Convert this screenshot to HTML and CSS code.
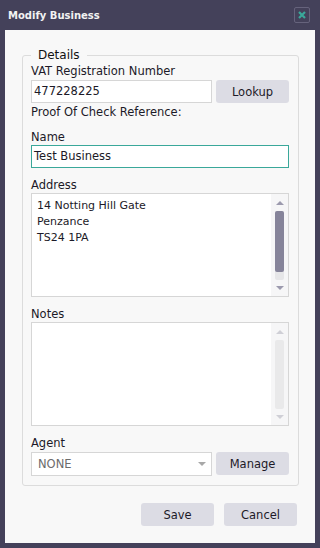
FILE: index.html
```html
<!DOCTYPE html>
<html>
<head>
  <title>Modify Business</title>
  <link rel="stylesheet" href="styles.css">
</head>
<body>
  <div class="window">
    <div class="titlebar">
      <span class="title">Modify Business</span>
      <span class="close">
        <svg width="10" height="10" viewBox="0 0 10 10">
          <path d="M2 2 L8 8 M8 2 L2 8" stroke="#3aa89a" stroke-width="2.2"/>
        </svg>
      </span>
    </div>

    <div class="content">
      <fieldset class="details">
        <legend>Details</legend>

        <div class="label">VAT Registration Number</div>
        <div class="row">
          <div class="input short">477228225</div>
          <button class="btn">Lookup</button>
        </div>
        <div class="label proof">Proof Of Check Reference:</div>

        <div class="label gap">Name</div>
        <div class="input focused">Test Business</div>

        <div class="label gap">Address</div>
        <div class="area">
          <div class="area-text">14 Notting Hill Gate<br>Penzance<br>TS24 1PA</div>
          <div class="scroll">
            <span class="arrow up"></span>
            <div class="track"><div class="thumb"></div></div>
            <span class="arrow down"></span>
          </div>
        </div>

        <div class="label gap">Notes</div>
        <div class="area">
          <div class="area-text"></div>
          <div class="scroll disabled">
            <span class="arrow up"></span>
            <div class="track"></div>
            <span class="arrow down"></span>
          </div>
        </div>

        <div class="label gap">Agent</div>
        <div class="row">
          <div class="input short select">
            <span>NONE</span>
            <span class="caret"></span>
          </div>
          <button class="btn">Manage</button>
        </div>
      </fieldset>

      <div class="actions">
        <button class="btn">Save</button>
        <button class="btn">Cancel</button>
      </div>
    </div>
  </div>
</body>
</html>
```

FILE: styles.css
```css
body {
  margin: 0;
  background-color: #44415a;
  font-family: "DejaVu Sans", sans-serif;
  font-size: 11.5px;
  color: #1c1a28;
}

.window {
  width: 320px;
  height: 548px;
  box-sizing: border-box;
  padding: 0 5px 5px 5px;
}

.titlebar {
  height: 30px;
  display: flex;
  align-items: center;
  justify-content: space-between;
  padding: 0 5px 0 3px;
}

.title {
  color: #f2f2f2;
  font-weight: bold;
  font-size: 10px;
}

.close {
  width: 14px;
  height: 14px;
  border: 1px solid #66637c;
  border-radius: 2px;
  display: flex;
  align-items: center;
  justify-content: center;
}

.content {
  background-color: #f8f8f8;
  height: 513px;
  padding: 18px 0 0 0;
  box-sizing: border-box;
}

.details {
  margin: 0 17px;
  padding: 2px 9px 9px 8px;
  border: 1px solid #dcdcdc;
  border-radius: 3px;
}

.details legend {
  padding: 0 7px;
  margin-left: 0;
  font-size: 12px;
  color: #111;
}

.label {
  line-height: 15px;
  height: 15px;
}

.label.proof {
  margin-top: 2px;
}

.label.gap {
  margin-top: 10px;
}

.row {
  display: flex;
  gap: 4px;
  align-items: flex-start;
  margin-top: 1px;
}

.input {
  height: 23px;
  box-sizing: border-box;
  border: 1px solid #d6d6d6;
  background-color: #fff;
  padding: 0 2px;
  line-height: 21px;
  font-size: 11.5px;
}

.input.short {
  width: 181px;
}

.input.focused {
  border-color: #3aa89a;
}

.select {
  display: flex;
  justify-content: space-between;
  align-items: center;
  padding: 0 5px 0 6px;
  color: #6c6c6c;
  height: 24px;
}

.caret {
  width: 0;
  height: 0;
  border-left: 4px solid transparent;
  border-right: 4px solid transparent;
  border-top: 4px solid #a8a8a8;
}

.btn {
  width: 73px;
  height: 23px;
  border: none;
  border-radius: 3px;
  background-color: #dcdce4;
  font-family: "DejaVu Sans", sans-serif;
  font-size: 11.5px;
  color: #1c1a28;
  padding: 0;
}

.area {
  height: 104px;
  box-sizing: border-box;
  border: 1px solid #d6d6d6;
  background-color: #fff;
  display: flex;
}

.area-text {
  flex: 1;
  padding: 4px 5px;
  line-height: 16px;
  font-size: 11px;
}

.scroll {
  width: 17px;
  background-color: #f6f6f7;
  display: flex;
  flex-direction: column;
  align-items: center;
  padding: 7px 0 6px 0;
  box-sizing: border-box;
}

.arrow {
  width: 0;
  height: 0;
  border-left: 4px solid transparent;
  border-right: 4px solid transparent;
}

.arrow.up {
  border-bottom: 4px solid #9c9aae;
}

.arrow.down {
  border-top: 4px solid #9c9aae;
}

.track {
  flex: 1;
  width: 9px;
  margin: 6px 0;
  background-color: #e6e6e8;
  border-radius: 2px;
}

.thumb {
  height: 61px;
  background-color: #86849a;
  border-radius: 2px;
}

.disabled .arrow.up {
  border-bottom-color: #cfcfd6;
}

.disabled .arrow.down {
  border-top-color: #cfcfd6;
}

.disabled .track {
  background-color: #e9e9ea;
}

.actions {
  display: flex;
  justify-content: flex-end;
  gap: 10px;
  margin: 17px 18px 0 0;
}
```
